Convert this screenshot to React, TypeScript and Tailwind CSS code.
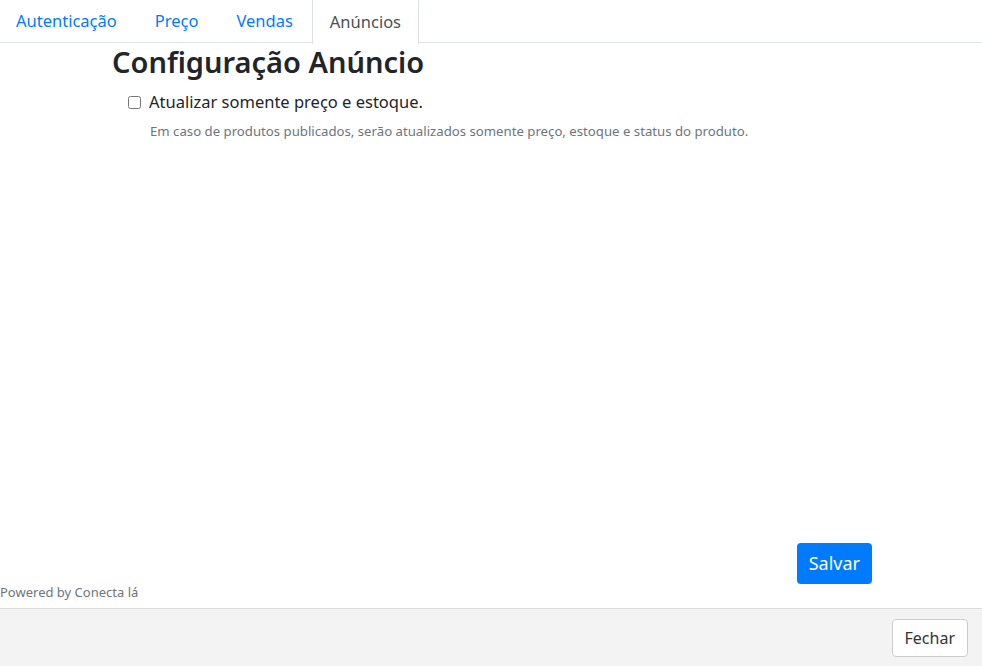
export default function App() {
  const tabs = ['Autenticação', 'Preço', 'Vendas'];
  return (
    <div className="flex h-[666px] w-[982px] flex-col bg-white font-['Segoe_UI','Noto_Sans',sans-serif] text-[#212529]">
      <div className="flex-1">
        <nav className="flex h-[43px] border-b border-[#dee2e6]">
          {tabs.map((t, i) => (
            <a
              key={t}
              className={`flex h-[43px] items-center pr-[19px] text-[16.5px] text-[#007bff] ${i === 0 ? 'pl-[16px]' : 'pl-[19px]'}`}
            >
              {t}
            </a>
          ))}
          <a className="-mb-px flex h-[44px] items-center border-x border-[#dee2e6] bg-white px-[17px] text-[16.5px] text-[#495057]">
            Anúncios
          </a>
        </nav>

        <div className="pl-[112px]">
          <h3 className="mt-[1px] text-[29px] font-semibold leading-[36px]">Configuração Anúncio</h3>
          <div className="mt-[10px] pl-[16px]">
            <label className="flex items-center gap-[8px] text-[16.5px] leading-[24px]">
              <input type="checkbox" className="h-[13px] w-[13px]" />
              Atualizar somente preço e estoque.
            </label>
            <p className="mt-[8px] pl-[22px] text-[13.2px] leading-[18px] text-[#6c757d]">
              Em caso de produtos publicados, serão atualizados somente preço, estoque e status do produto.
            </p>
          </div>
        </div>
      </div>

      <div className="flex justify-end pr-[110px]">
        <button className="h-[41px] rounded-[4px] bg-[#007bff] px-[12px] text-[18px] text-white">Salvar</button>
      </div>
      <p className="mb-[7px] -mt-px text-[13px] leading-[18px] text-[#6c757d]">Powered by Conecta lá</p>

      <footer className="flex h-[58px] items-center justify-end border-t border-[#dcdcdc] bg-[#f3f3f3] pr-[14px]">
        <button className="h-[38px] rounded-[4px] border border-[#cccccc] bg-white px-[12px] text-[16px] text-[#333333]">
          Fechar
        </button>
      </footer>
    </div>
  );
}
